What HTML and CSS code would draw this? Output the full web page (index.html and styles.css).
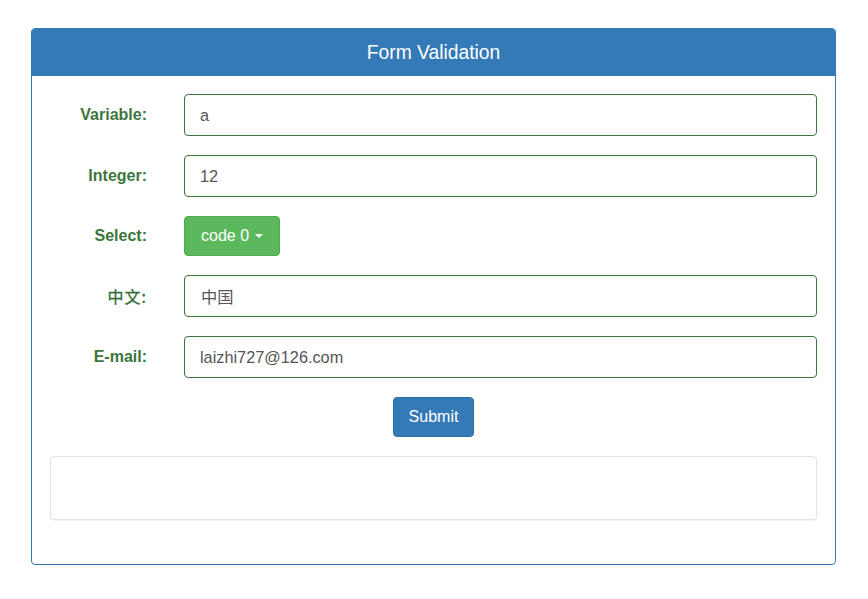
FILE: index.html
```html
<!DOCTYPE html>
<html lang="en">
<head>
<meta charset="utf-8">
<title>Form Validation</title>
<link rel="stylesheet" href="styles.css">
</head>
<body>
<div class="panel">
  <div class="panel-heading">Form Validation</div>
  <div class="panel-body">
    <div class="form-row">
      <label class="control-label">Variable:</label>
      <div class="field"><input class="form-control" type="text" value="a"></div>
    </div>
    <div class="form-row">
      <label class="control-label">Integer:</label>
      <div class="field"><input class="form-control" type="text" value="12"></div>
    </div>
    <div class="form-row">
      <label class="control-label">Select:</label>
      <div class="field"><button class="btn btn-success" type="button">code 0<span class="caret"></span></button></div>
    </div>
    <div class="form-row">
      <label class="control-label cjk">中文:</label>
      <div class="field"><input class="form-control cjk-input" type="text" value="中国"></div>
    </div>
    <div class="form-row">
      <label class="control-label">E-mail:</label>
      <div class="field"><input class="form-control" type="text" value="laizhi727@126.com"></div>
    </div>
    <div class="submit-row">
      <button class="btn btn-primary" type="button">Submit</button>
    </div>
    <div class="well"></div>
  </div>
</div>
</body>
</html>
```

FILE: styles.css
```css
* {
  box-sizing: border-box;
}

html, body {
  margin: 0;
  background: #ffffff;
}

body {
  padding: 28px 32px 28px 31px;
  font-family: "Liberation Sans", Arial, "Noto Sans CJK SC", sans-serif;
  font-size: 16px;
  line-height: 1.5;
  color: #333333;
}

.panel {
  border: 1px solid #337ab7;
  border-radius: 4px;
  background: #ffffff;
}

.panel-heading {
  height: 47px;
  background: #337ab7;
  color: #ffffff;
  font-size: 19.3px;
  line-height: 47px;
  text-align: center;
  border-radius: 3px 3px 0 0;
}

.panel-body {
  display: flex;
  flex-direction: column;
  gap: 19px;
  padding: 18px 18px 44px 18px;
}

.form-row {
  display: grid;
  grid-template-columns: 134px 1fr;
  align-items: center;
}

.control-label {
  text-align: right;
  padding-right: 37px;
  font-weight: bold;
  color: #3c763d;
}

.control-label.cjk {
  font-weight: normal;
  font-family: "Noto Sans CJK SC", "Liberation Sans", sans-serif;
  font-size: 16px;
  letter-spacing: 1px;
  color: #2f6b31;
  -webkit-text-stroke: 0.3px #3c763d;
}

.field {
  min-width: 0;
}

.form-control {
  display: block;
  width: 100%;
  height: 42px;
  padding: 8px 15px;
  font-family: "Liberation Sans", Arial, "Noto Sans CJK SC", sans-serif;
  font-size: 16.3px;
  line-height: 24px;
  color: #555555;
  background: #ffffff;
  border: 1px solid #3c763d;
  border-radius: 4px;
  outline: none;
}

.cjk-input {
  padding-left: 16px;
}

.btn {
  display: inline-flex;
  align-items: center;
  height: 40px;
  padding: 7px 16px;
  font-family: "Liberation Sans", Arial, sans-serif;
  font-size: 16px;
  line-height: 24px;
  color: #ffffff;
  border-radius: 4px;
  cursor: pointer;
}

.btn-success {
  background: #5cb85c;
  border: 1px solid #4cae4c;
}

.btn-primary {
  background: #337ab7;
  border: 1px solid #2e6da4;
  padding: 7px 15px;
}

.caret {
  display: inline-block;
  width: 0;
  height: 0;
  margin-left: 6px;
  border-top: 4px solid #ffffff;
  border-left: 4px solid transparent;
  border-right: 4px solid transparent;
}

.submit-row {
  display: flex;
  justify-content: center;
}

.well {
  height: 64px;
  border: 1px solid #e3e3e3;
  border-radius: 4px;
  background: #ffffff;
  box-shadow: 0 1px 1px rgba(0, 0, 0, 0.05);
}
```
